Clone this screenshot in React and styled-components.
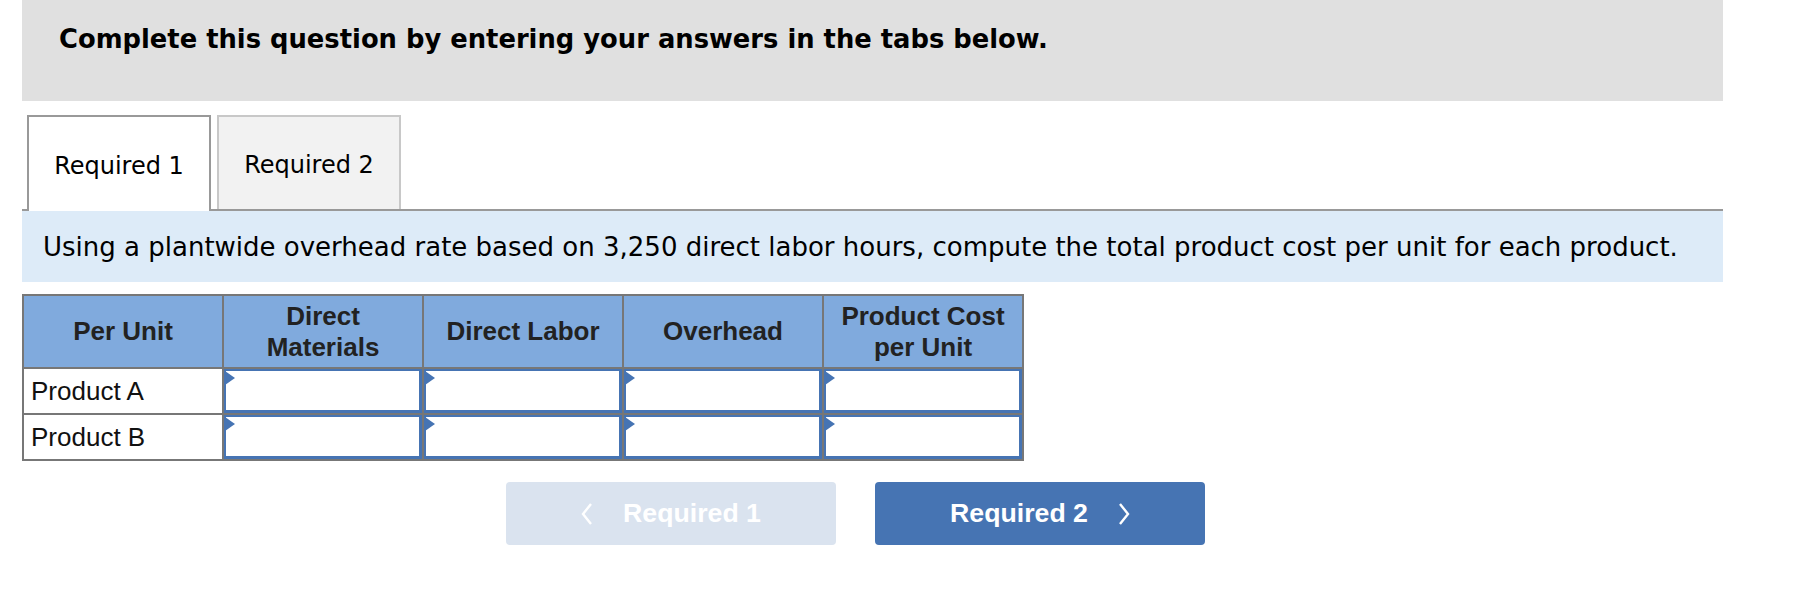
import styled, { createGlobalStyle } from 'styled-components'

const GlobalStyle = createGlobalStyle`
  body {
    margin: 0;
    background: #fff;
  }
`

const Page = styled.div`
  width: 1701px;
  margin-left: 22px;
`

const Banner = styled.div`
  height: 101px;
  box-sizing: border-box;
  padding: 23px 0 0 37px;
  background: #e0e0e0;
`

const BannerTitle = styled.h2`
  margin: 0;
  font: bold 25.8px/32px "DejaVu Sans", Verdana, sans-serif;
  color: #000;
`

const TabStrip = styled.div`
  display: flex;
  align-items: flex-end;
  gap: 6px;
  margin-top: 14px;
  padding-left: 5px;
  border-bottom: 2px solid #999;
`

const Tab = styled.button`
  box-sizing: border-box;
  width: 184px;
  height: ${p => (p.$active ? 96 : 94)}px;
  margin-bottom: ${p => (p.$active ? -2 : 0)}px;
  padding: 4px 0 0;
  border: 2px solid ${p => (p.$active ? '#999' : '#c8c8c8')};
  border-bottom: none;
  background: ${p => (p.$active ? '#fff' : '#f2f2f2')};
  font: 24px "DejaVu Sans", Verdana, sans-serif;
  color: #000;
  cursor: pointer;
`

const Prompt = styled.p`
  display: flex;
  align-items: center;
  height: 71px;
  margin: 0;
  padding-left: 21px;
  background: #ddebf8;
  font: 26px "DejaVu Sans", Verdana, sans-serif;
  color: #000;
`

const Grid = styled.table`
  width: 1002px;
  margin-top: 12px;
  border-collapse: collapse;
  table-layout: fixed;
  font-family: "Liberation Sans", Arial, Helvetica, sans-serif;
`

const HeadCell = styled.th`
  height: 71px;
  padding: 0 4px;
  border: 2px solid #777;
  background: #80aadd;
  font-size: 26px;
  font-weight: bold;
  line-height: 31px;
  color: #222;
  text-align: center;
`

const LabelCell = styled.td`
  height: 44px;
  padding: 0 0 0 7px;
  border: 2px solid #777;
  font-size: 26px;
  color: #111;
`

const EntryCell = styled.td`
  position: relative;
  height: 44px;
  padding: 0;
  border: 2px solid #777;

  &::before {
    content: '';
    position: absolute;
    top: 2px;
    left: 1px;
    border-top: 7px solid transparent;
    border-bottom: 7px solid transparent;
    border-left: 10px solid #4674b3;
  }
`

const Entry = styled.input`
  display: block;
  box-sizing: border-box;
  width: 100%;
  height: 44px;
  margin: 0;
  border: 3px solid #4674b3;
  border-width: 2px 3px 3px 2px;
  background: #fff;
  outline: none;
`

const NavRow = styled.div`
  display: flex;
  gap: 39px;
  margin: 21px 0 0 484px;
`

const NavButton = styled.button`
  display: flex;
  align-items: center;
  justify-content: center;
  gap: 30px;
  width: 330px;
  height: 63px;
  border: none;
  border-radius: 4px;
  background: ${p => (p.$muted ? '#dae3ef' : '#4674b3')};
  font: bold 26.7px "Liberation Sans", Arial, Helvetica, sans-serif;
  color: #fff;
  cursor: ${p => (p.$muted ? 'default' : 'pointer')};
`

const Chevron = ({ dir }) => (
  <svg width="12" height="22" viewBox="0 0 12 22" fill="none">
    <polyline
      points={dir === 'left' ? '10,1 2,11 10,21' : '2,1 10,11 2,21'}
      stroke="#fff"
      strokeWidth="2.4"
    />
  </svg>
)

const columns = ['Direct Materials', 'Direct Labor', 'Overhead', 'Product Cost per Unit']
const products = ['Product A', 'Product B']

function App() {
  return (
    <Page>
      <GlobalStyle />
      <Banner>
        <BannerTitle>Complete this question by entering your answers in the tabs below.</BannerTitle>
      </Banner>
      <TabStrip>
        <Tab $active>Required 1</Tab>
        <Tab>Required 2</Tab>
      </TabStrip>
      <Prompt>
        Using a plantwide overhead rate based on 3,250 direct labor hours, compute the total product cost per unit for each product.
      </Prompt>
      <Grid>
        <thead>
          <tr>
            <HeadCell>Per Unit</HeadCell>
            <HeadCell>Direct<br />Materials</HeadCell>
            <HeadCell>Direct Labor</HeadCell>
            <HeadCell>Overhead</HeadCell>
            <HeadCell>Product Cost<br />per Unit</HeadCell>
          </tr>
        </thead>
        <tbody>
          {products.map(name => (
            <tr key={name}>
              <LabelCell>{name}</LabelCell>
              {columns.map(col => (
                <EntryCell key={col}>
                  <Entry type="text" aria-label={`${name} ${col}`} />
                </EntryCell>
              ))}
            </tr>
          ))}
        </tbody>
      </Grid>
      <NavRow>
        <NavButton $muted disabled>
          <Chevron dir="left" />
          Required 1
        </NavButton>
        <NavButton>
          Required 2
          <Chevron dir="right" />
        </NavButton>
      </NavRow>
    </Page>
  )
}

export default App
